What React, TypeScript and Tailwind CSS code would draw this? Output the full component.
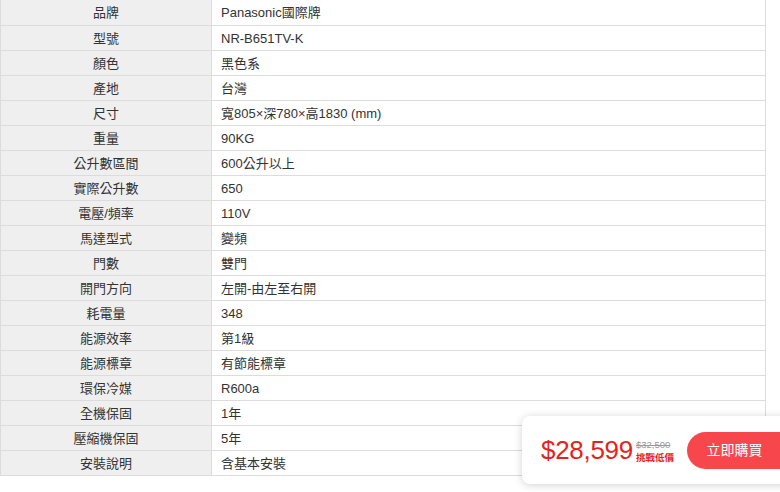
const specs: [string, string][] = [
  ['品牌', 'Panasonic國際牌'],
  ['型號', 'NR-B651TV-K'],
  ['顏色', '黑色系'],
  ['產地', '台灣'],
  ['尺寸', '寬805×深780×高1830 (mm)'],
  ['重量', '90KG'],
  ['公升數區間', '600公升以上'],
  ['實際公升數', '650'],
  ['電壓/頻率', '110V'],
  ['馬達型式', '變頻'],
  ['門數', '雙門'],
  ['開門方向', '左開-由左至右開'],
  ['耗電量', '348'],
  ['能源效率', '第1級'],
  ['能源標章', '有節能標章'],
  ['環保冷媒', 'R600a'],
  ['全機保固', '1年'],
  ['壓縮機保固', '5年'],
  ['安裝說明', '含基本安裝'],
];

export default function App() {
  return (
    <div className="relative w-[780px] h-[492px] overflow-hidden bg-white font-['Liberation_Sans','Noto_Sans_CJK_TC',sans-serif] text-[13px] text-[#333]">
      {/* Spec table */}
      <table className="w-[766px] border-collapse">
        <tbody>
          {specs.map(([label, value]) => (
            <tr key={label} className="h-[25px]">
              <td className="w-[211px] border border-[#dcdcdc] border-t-0 bg-[#efefef] pt-[1px] text-center align-middle leading-[23px]">
                {label}
              </td>
              <td className="border border-[#dcdcdc] border-t-0 bg-white pl-[9px] pt-[1px] align-middle leading-[23px]">
                {value}
              </td>
            </tr>
          ))}
        </tbody>
      </table>

      {/* Floating buy bar */}
      <div className="absolute left-[522px] top-[416px] w-[280px] h-[68px] rounded-lg bg-white shadow-[0_1px_8px_rgba(0,0,0,0.18)] flex items-center pl-[19px] whitespace-nowrap">
        <div className="flex shrink-0 items-center">
          <span className="text-[26px] leading-none tracking-[-0.3px] text-[#e1251b] font-['Liberation_Sans',sans-serif]">
            $28,599
          </span>
          <div className="ml-[3px] mt-[2px] flex flex-col leading-none">
            <span className="text-[9.5px] text-[#999] line-through">$32,500</span>
            <span className="mt-[3px] text-[9.5px] font-bold text-[#e1251b]">挑戰低價</span>
          </div>
        </div>
        <button className="ml-[13px] h-[37px] w-[110px] shrink-0 rounded-full bg-[#f7474d] pr-[15px] text-[14px] text-white">
          立即購買
        </button>
      </div>
    </div>
  );
}
